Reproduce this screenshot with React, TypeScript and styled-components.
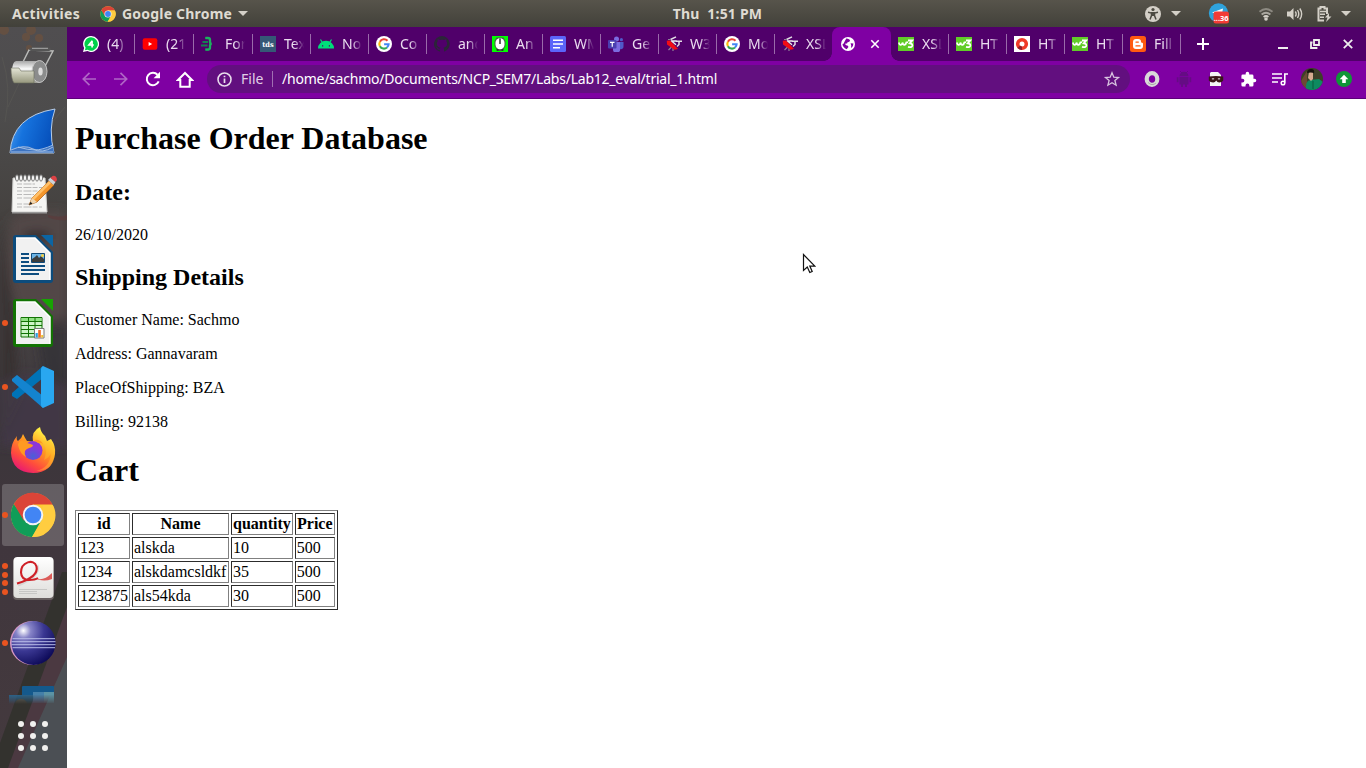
import React from "react";
import styled, { createGlobalStyle } from "styled-components";

const GlobalStyle = createGlobalStyle`
  html, body, #root { height: 100%; margin: 0; }
  body { overflow: hidden; background: #fff; }
  * { box-sizing: border-box; }
  svg { display: block; flex: none; }
`;

const uiFont = `"Noto Sans", "Open Sans", sans-serif`;

const Desktop = styled.div`
  width: 1366px;
  height: 768px;
  display: flex;
  flex-direction: column;
`;

/* ---------- system bar ---------- */
const SystemBar = styled.header`
  height: 27px;
  flex: none;
  display: grid;
  grid-template-columns: 667px 101px 1fr;
  align-items: center;
  background: linear-gradient(#57544b, #42413a);
  color: #dfdbd2;
  font: bold 14px/27px ${uiFont};
`;
const SystemLeft = styled.div`
  display: flex;
  align-items: center;
  padding-left: 12px;
`;
const SystemLabel = styled.span<{ $w: number; $sp?: number }>`
  width: ${(p) => p.$w}px;
  letter-spacing: ${(p) => p.$sp ?? 0}px;
  white-space: pre;
`;
const Clock = styled.div`
  text-align: center;
  white-space: pre;
  letter-spacing: 0.2px;
`;
const SystemRight = styled.div`
  display: flex;
  justify-content: flex-end;
  align-items: center;
  padding-right: 15px;
`;
const Slot = styled.div<{ $w: number }>`
  width: ${(p) => p.$w}px;
  display: flex;
  align-items: center;
  justify-content: center;
`;
const Caret = styled.i<{ $ml?: number }>`
  margin-left: ${(p) => p.$ml ?? 0}px;
  border: 5px solid transparent;
  border-top-color: #d4d0c8;
  border-bottom: 0;
`;

const Main = styled.div`
  flex: 1;
  display: flex;
  min-height: 0;
`;

/* ---------- dock ---------- */
const Dock = styled.nav`
  position: relative;
  width: 67px;
  flex: none;
  overflow: hidden;
  background: #494649;
`;
const Wallpaper = styled.svg`
  position: absolute;
  inset: 0;
`;
const DockList = styled.div`
  position: relative;
  padding-top: 8px;
  display: flex;
  flex-direction: column;
`;
const DockItem = styled.div<{ $active?: boolean }>`
  height: 62px;
  width: 62px;
  margin: 1px 0 1px 2px;
  border-radius: 3px;
  display: grid;
  grid-template-columns: 6px 50px 6px;
  align-items: center;
  justify-items: center;
  background: ${(p) => (p.$active ? "rgba(255,255,255,.2)" : "transparent")};
`;
const Dots = styled.div`
  display: flex;
  flex-direction: column;
  gap: 2.5px;
`;
const Dot = styled.i`
  width: 6px;
  height: 6px;
  border-radius: 50%;
  background: #e95420;
`;
const PeekItem = styled.div`
  height: 32px;
  padding: 10px 0 0 9px;
`;
const AppGrid = styled.div`
  display: grid;
  grid-template-columns: repeat(3, 6px);
  gap: 6px;
  padding: 14px 0 0 18px;
`;
const AppDot = styled.i`
  width: 6px;
  height: 6px;
  border-radius: 50%;
  background: #f1f0ee;
`;

/* ---------- browser ---------- */
const Browser = styled.section`
  flex: 1;
  min-width: 0;
  display: flex;
  flex-direction: column;
  background: #fff;
`;
const TabStrip = styled.div`
  height: 34px;
  flex: none;
  display: flex;
  padding-left: 10px;
  background: #50006a;
`;
const Tab = styled.div<{ $sep?: boolean; $w?: number }>`
  width: ${(p) => p.$w ?? 58}px;
  flex: none;
  display: flex;
  align-items: center;
  padding-left: 6px;
  gap: 8px;
  background: linear-gradient(#9a6aaa, #9a6aaa) right 1px top 7px / ${(p) => (p.$sep ? "1px" : "0")} 20px no-repeat;
`;
const TabTitle = styled.span`
  width: 20px;
  overflow: hidden;
  white-space: nowrap;
  color: #eadcef;
  font: 14px/20px ${uiFont};
  mask-image: linear-gradient(90deg, #000 50%, transparent 100%);
`;
const ActiveTab = styled.div`
  position: relative;
  width: 59px;
  flex: none;
  margin: 0 1px 0 -2px;
  display: flex;
  align-items: center;
  padding-left: 9px;
  gap: 15px;
  background: #7f00a3;
  border-radius: 8px 8px 0 0;
  &::before, &::after {
    content: "";
    position: absolute;
    bottom: 0;
    width: 8px;
    height: 8px;
  }
  &::before { left: -8px; background: radial-gradient(circle at 0 0, transparent 7.5px, #7f00a3 8px); }
  &::after { right: -8px; background: radial-gradient(circle at 100% 0, transparent 7.5px, #7f00a3 8px); }
`;
const NewTab = styled.div`
  width: 42px;
  display: flex;
  align-items: center;
  justify-content: center;
`;
const WindowControls = styled.div`
  margin-left: auto;
  display: flex;
  padding-right: 2px;
`;
const Toolbar = styled.div`
  height: 38px;
  flex: none;
  display: flex;
  align-items: center;
  padding: 0 6px 1px 6px;
  background: #7f00a3;
  border-bottom: 1px solid #5c0079;
`;
const Omnibox = styled.div`
  flex: none;
  width: 923px;
  height: 28px;
  margin: 0 6px 0 6px;
  border-radius: 14px;
  display: flex;
  align-items: center;
  padding: 0 8px 0 10px;
  background: #620f7f;
  color: #fff;
  font: 14px/28px ${uiFont};
`;
const Scheme = styled.span`
  width: 32px;
  margin-left: 9px;
  color: #e0cfe6;
  border-right: 1px solid #a06fb2;
  line-height: 16px;
`;
const Url = styled.span`
  flex: 1;
  margin-left: 9px;
  letter-spacing: -0.23px;
`;

/* ---------- document ---------- */
const Page = styled.main`
  flex: 1;
  padding: 0 8px;
  overflow: hidden;
  color: #000;
  font: 16px/normal "Liberation Serif", "Times New Roman", serif;
  display: flow-root;
`;
const Title = styled.h1`
  font-size: 32px;
  margin: 21.44px 0;
`;
const Subtitle = styled.h2`
  font-size: 24px;
  margin: 19.92px 0;
`;
const Line = styled.p`
  margin: 16px 0;
`;
const CartTable = styled.table.attrs({ border: 1 } as object)`
  font-size: 16px;
  th:nth-child(2) { width: 97px; }
  th:nth-child(4) { width: 40px; }
`;

const Pointer = styled.svg`
  position: absolute;
  left: 802px;
  top: 253px;
`;

/* ---------- icons ---------- */
const ChromeIcon = ({ s }: { s: number }) => (
  <svg width={s} height={s} viewBox="0 0 48 48">
    <circle cx="24" cy="24" r="23" fill="#fc3" />
    <path d="M4 12.500A23 23 0 0 0 23 47l10-18-18-1z" fill="#109d58" />
    <path d="M44.700 13.500A23 23 0 0 1 23 47l11-18 0-15z" fill="#ffcd40" />
    <path d="M4 12.500 14.500 30 24 13h20.500A23 23 0 0 0 4 12.500z" fill="#db4437" />
    <circle cx="24" cy="24" r="10.700" fill="#f4f4f4" />
    <circle cx="24" cy="24" r="8.700" fill="#4285f4" />
  </svg>
);

const Fav = ({ children }: { children: React.ReactNode }) => (
  <svg width="16" height="16" viewBox="0 0 16 16">{children}</svg>
);
const WhatsApp = () => (
  <Fav>
    <path d="M8 0a8 8 0 1 1-3.600 15.100L0 16l1.100-4A8 8 0 0 1 8 0z" fill="#fff" />
    <path d="M8 1.300a6.700 6.700 0 1 1-3.400 12.400L1.900 14.300l.7-2.600A6.700 6.700 0 0 1 8 1.300z" fill="#00d14b" />
    <path d="M9.300 4.700 5.900 9h4.900M9.100 4.700v6.800" fill="none" stroke="#fff" strokeWidth="1.600" />
  </Fav>
);
const YouTube = () => (
  <Fav><rect x=".7" y="2.300" width="14.600" height="11.400" rx="2" fill="#f00" /><path d="m6.600 5.900 3.600 2.100-3.600 2.100z" fill="#fff" /></Fav>
);
const Braces = () => (
  <Fav>
    <path d="M4 2h4M1.500 6h5.500M0 9.500h6.500M4 13.500h4" stroke="#12834f" strokeWidth="1.900" />
    <path d="M4.500 2H7q2 0 2 2v2q0 1.800 1.800 1.800Q9 7.800 9 9.600v2q0 2-2 2H4.500" fill="none" stroke="#1db05f" strokeWidth="2.300" />
  </Fav>
);
const Tds = () => (
  <Fav>
    <rect width="16" height="16" fill="#355876" />
    <text x="8" y="10.600" fill="#fff" fontSize="7" fontWeight="bold" fontFamily="DejaVu Serif, serif" textAnchor="middle" textLength="11.500" lengthAdjust="spacingAndGlyphs">tds</text>
  </Fav>
);
const Android = () => (
  <Fav>
    <path d="M0 12.500a8 7.800 0 0 1 16 0z" fill="#00de7a" />
    <path d="m2.500 3.500 2 3.300m9-3.300-2 3.300" stroke="#00de7a" strokeWidth="1.200" />
    <path d="M4 9.200h1.200v1.200H4zm6.800 0H12v1.200h-1.200z" fill="#50006a" />
  </Fav>
);
const Google = () => (
  <Fav>
    <circle cx="8" cy="8" r="8" fill="#fff" />
    <g fill="none" strokeWidth="2.100">
      <path d="M11.500 4.700A4.700 4.700 0 0 0 3.900 5.800" stroke="#ea4335" />
      <path d="M3.900 5.700a4.700 4.700 0 0 0 0 4.600" stroke="#fbbc05" />
      <path d="M3.900 10.200a4.700 4.700 0 0 0 7.100 1.300" stroke="#34a853" />
      <path d="M11 11.500a4.700 4.700 0 0 0 1.600-3.300H8.100" stroke="#4285f4" />
    </g>
  </Fav>
);
const GitHub = () => (
  <Fav>
    <path
      d="M8 0a8 8 0 0 0-2.500 15.600c.4.100.5-.2.500-.4v-1.500c-2.200.5-2.700-1-2.700-1-.4-.9-.9-1.200-.9-1.200-.7-.5.1-.5.100-.5.800.1 1.200.8 1.200.8.700 1.300 1.900.9 2.300.7.100-.5.300-.9.500-1.100-1.800-.2-3.600-.9-3.600-4 0-.9.300-1.600.8-2.100-.1-.2-.4-1 .1-2.100 0 0 .7-.2 2.200.8a7.600 7.600 0 0 1 4 0c1.500-1 2.200-.8 2.200-.8.400 1.100.1 1.900.1 2.100.5.500.8 1.200.8 2.100 0 3.100-1.900 3.800-3.700 4 .3.200.6.700.6 1.500v2.200c0 .2.100.5.500.4A8 8 0 0 0 8 0z"
      fill="#2b2538"
    />
  </Fav>
);
const Appium = () => (
  <Fav>
    <rect width="16" height="16" fill="#0f0" />
    <path d="M4.500 1.500 2.500 5v5l3 5h5l3-5V5l-2-3.500z" fill="#4a5a4a" />
    <rect x="3.500" y="2.300" width="9" height="11" rx="4.500" fill="#fff" />
    <path d="M8 2.500v5.500" stroke="#333" strokeWidth="1.500" />
    <path d="M5.500 13v2m5-2v2" stroke="#333" strokeWidth="1.700" />
  </Fav>
);
const Docs = () => (
  <Fav><rect width="16" height="16" rx="1.500" fill="#5b64fa" /><path d="M3 4.200h10M3 8h10M3 11.800h7" stroke="#fff" strokeWidth="1.600" /></Fav>
);
const Teams = () => (
  <Fav>
    <circle cx="8.500" cy="3" r="2.500" fill="#7b6be0" /><circle cx="13.400" cy="3.700" r="1.600" fill="#5059c9" />
    <path d="M5 6h7v6.500a3.500 3.500 0 0 1-7 1.500z" fill="#7b6be0" /><path d="M12 6h3.500v4.500A2.500 2.500 0 0 1 12 13z" fill="#5059c9" />
    <rect y="4" width="8.500" height="8.500" rx="1" fill="#4b3fb0" /><path d="M2 6.400h4.500M4.250 6.400v4.300" stroke="#fff" strokeWidth="1.200" />
  </Fav>
);
const Validator = () => (
  <Fav>
    <path d="M4.500 3.500 10 .8M10 5.300h6M13 5.500v3l-2 2" fill="none" stroke="#e3dde6" strokeWidth="1.500" />
    <path d="M5.500 11 2.500 14M7 11v4M2 3.500h3" fill="none" stroke="#8f8498" strokeWidth="1.200" />
    <path d="M.8 4.800 4 4.500l8 8.500-3.500.8L1 8.500z" fill="#f20d14" />
    <path d="m5 4.500 5 4.300M5.500 5h5" stroke="#eee" strokeWidth="1.300" />
  </Fav>
);
const W3s = () => (
  <Fav>
    <rect y="1" width="16" height="14" fill="#61cc28" />
    <path d="M.8 6.500q.4 2.500 2 2.300 1.500-.3 1.700-2.300.4 2.500 2 2.300Q8 8.500 8.300 6.500l1.700-.3" fill="none" stroke="#fff" strokeWidth="1.700" />
    <path d="M10 4.500h4.200L11.800 7.300q2.700.2 2.500 2.400-.6 2.300-4.300 1.100" fill="none" stroke="#fff" strokeWidth="1.800" />
  </Fav>
);
const RedRing = () => (
  <Fav>
    <rect width="16" height="16" fill="#fff" />
    <circle cx="8" cy="8" r="4.300" fill="none" stroke="#ef3a27" strokeWidth="3.600" />
    <path d="M8 14.100a6.100 6.100 0 0 1-4.500-2l2.700-2.500q1 1 1.800.9z" fill="#8e1e2b" />
  </Fav>
);
const Blogger = () => (
  <Fav>
    <rect width="16" height="16" rx="2.500" fill="#ff5a10" />
    <path d="M6 3h2.300q2.700 0 2.700 2.700 0 1 1 1t1 1V10q0 3-3 3H6q-3 0-3-3V6q0-3 3-3z" fill="#fff" />
    <path d="M6 6.100h2.300M6 9.900h4" stroke="#ff5a10" strokeWidth="1.400" strokeLinecap="round" />
  </Fav>
);
const Globe = () => (
  <svg width="14" height="14" viewBox="0 0 16 16">
    <circle cx="8" cy="8" r="8" fill="#fff" />
    <path d="M6 1.700q4 .3 4.300 2.300-.3 2-2.500 2-.8 0-.8 1.500H5q-.3 1.700 1 2 2.500 0 2.500 2L6.500 14Q2 12 1.700 8q2-.2 2-2zM11 7l3.200.4q0 3.200-2.400 5.200-.7-1.500 0-2.300z" fill="#7f00a3" />
  </svg>
);

type TabInfo = { title: string; Icon: React.FC; noSep?: boolean; w?: number };
const tabs: TabInfo[] = [
  { title: "(4)", Icon: WhatsApp, w: 59 },
  { title: "(21", Icon: YouTube, w: 59 },
  { title: "For", Icon: Braces, w: 59 },
  { title: "Tex", Icon: Tds },
  { title: "No", Icon: Android },
  { title: "Co", Icon: Google },
  { title: "and", Icon: GitHub },
  { title: "An", Icon: Appium },
  { title: "WM", Icon: Docs },
  { title: "Ge", Icon: Teams },
  { title: "W3", Icon: Validator },
  { title: "Mo", Icon: Google },
  { title: "XSL", Icon: Validator, noSep: true },
];
const tabsAfter: TabInfo[] = [
  { title: "XSL", Icon: W3s },
  { title: "HT", Icon: W3s },
  { title: "HT", Icon: RedRing },
  { title: "HT", Icon: W3s },
  { title: "Fill", Icon: Blogger },
];

const TabItem = ({ title, Icon, noSep, w }: TabInfo) => (
  <Tab $sep={!noSep} $w={w}>
    <Icon />
    <TabTitle>{title}</TabTitle>
  </Tab>
);

/* dock icons */
const Roll = () => (
  <svg width="50" height="50" viewBox="-2 -1 50 50">
    <defs>
      <linearGradient id="roll" x2="0" y2="1"><stop stopColor="#a8a8a8" /><stop offset=".35" stopColor="#f8f8f8" /><stop offset="1" stopColor="#9a9b92" /></linearGradient>
      <linearGradient id="flap" x2="0" y2="1"><stop stopColor="#e4e5d6" /><stop offset="1" stopColor="#97987e" /></linearGradient>
    </defs>
    <path d="m13 19 6-12 24 1-11 21" fill="none" stroke="#b9bab8" strokeWidth="1.500" />
    <path d="M21 6.300h18" stroke="#555" strokeWidth="3.400" strokeLinecap="round" /><path d="M22 5.300h16" stroke="#aaa" />
    <path d="M6 18h24v22H6q-4-1-4-11T6 18z" fill="url(#roll)" />
    <ellipse cx="29.500" cy="28.500" rx="7.500" ry="11" fill="#8b8c8c" stroke="#c6c6c6" />
    <ellipse cx="30.500" cy="28.500" rx="2.200" ry="4" fill="#ddd" />
    <path d="M1 25h8l2 3h13v12H4q-3-4-3-15z" fill="url(#flap)" stroke="#6a6b5c" strokeWidth=".6" />
  </svg>
);
const Fin = () => (
  <svg width="50" height="50" viewBox="-1 0 50 50">
    <defs><linearGradient id="fin" x1="0" x2="1" y2=".3"><stop stopColor="#5aa5ee" /><stop offset=".4" stopColor="#1673de" /><stop offset="1" stopColor="#0752bd" /></linearGradient></defs>
    <path d="M1 47Q3 10 46 3q-7 20-1 44z" fill="url(#fin)" stroke="#b7cde8" />
    <path d="M2 43q14-5 22-1t20-3l1 8H1z" fill="#3d73c0" />
    <path d="M2 44q13-6 22-1t20-2M2 46h42M9 41q10 3 17 3t18-5" fill="none" stroke="#aac5e8" strokeWidth=".9" />
  </svg>
);
const Notepad = () => (
  <svg width="50" height="50" viewBox="-1 1 50 50">
    <path d="M4 9h32l2 34H3z" fill="#f5f5f3" stroke="#cfcfcd" /><path d="M3 43h35v1.500H3z" fill="#999" />
    <g stroke="#b9b9b9" strokeDasharray="5 1.500 8 1"><path d="M8 15h18M8 18.500h25M8 22h21M8 25.500h17M8 29h23M8 35h12M8 38h25" /></g>
    {[8, 12, 16, 20, 24, 28, 32].map((x) => <ellipse key={x} cx={x} cy="9" rx="1.500" ry="3.200" fill="#fff" stroke="#666" strokeWidth=".9" />)}
    <path d="m20 36 3-7L40 12l5 4-17 17z" fill="#f4962b" stroke="#b26216" strokeWidth=".8" />
    <path d="m23 29 17-17 2 2-17 17z" fill="#ffc069" />
    <path d="m20 36 3-7 5 4z" fill="#f0d5ae" /><path d="m20 36 1.500-3.300 2 2z" fill="#222" />
    <path d="m39 11 2.500-2.500 5 4.500-2 3z" fill="#ccd1d8" /><path d="m41.500 9 2-2q4-1 4.500 4l-1.500 2z" fill="#dd4245" />
  </svg>
);
const OfficeDoc = ({ dark, light, children }: { dark: string; light: string; children: React.ReactNode }) => (
  <svg width="50" height="50" viewBox="-2 0 50 50">
    <path d="M6 1h20l17 17v28q0 3-3 3H6q-3 0-3-3V4q0-3 3-3z" fill={dark} />
    <path d="M31 1h12v12z" fill={light} />
    <path d="M6 4h19l15 15v27H6z" fill="#f1f1f1" />
    <path d="M6 4h19l15 15v27" fill="none" stroke="#fff" strokeWidth="1.500" />
    {children}
  </svg>
);
const Writer = () => (
  <OfficeDoc dark="#0c4c7d" light="#0c65a3">
    <path d="M11 20h8M11 24h8M11 28h8M11 32h24M11 36h24M11 40h18" stroke="#0d4d80" strokeWidth="2" />
    <path d="M21.500 19.500h13v9h-13z" fill="#6cb4e6" stroke="#114a78" />
    <path d="m22 28 0-3 3-2 2-2 2 3 2-2 3 3v3z" fill="#3c3d3d" /><circle cx="32.500" cy="21.500" r="1.500" fill="#f4d03f" />
  </OfficeDoc>
);
const Calc = () => (
  <OfficeDoc dark="#127303" light="#18a303">
    <path d="M11 19.500h21v19.500H11z" fill="#ccf4c6" stroke="#127303" />
    <path d="M11.500 20h20v3h-20z" fill="#92e285" />
    <path d="M18.500 20v19M25 20v19M11 23.500h21M11 27.500h21M11 31.500h21M11 35.500h21" stroke="#127303" />
    <path d="M24.500 30.500h9.500v9.500h-9.500z" fill="#fff" stroke="#777" />
    <path d="M25.500 35h2.300v4.500h-2.300z" fill="#2ba0dd" /><path d="M28.200 32h2.600v7.500h-2.600z" fill="#ed6b21" /><path d="M31.200 37h2v2.500h-2z" fill="#f1c12c" />
  </OfficeDoc>
);
const Code = () => (
  <svg width="50" height="50" viewBox="-2 0 50 50">
    <path d="m33 4 0 12L7 37l-5-3v-3z" fill="#0073b7" /><path d="M2 17l5-4 26 21v12L2 19z" fill="#1484cf" />
    <path d="m33 4 11 5v32l-11 5q-2-1-2-3V7q0-2 2-3z" fill="#29a7f0" />
  </svg>
);
const Firefox = () => (
  <svg width="50" height="50" viewBox="-2 0 50 50">
    <defs>
      <linearGradient id="ff" x1=".8" y1="0" x2=".2" y2="1"><stop offset=".1" stopColor="#fff044" /><stop offset=".42" stopColor="#ff9a20" /><stop offset=".72" stopColor="#ff4c3d" /><stop offset="1" stopColor="#e5117b" /></linearGradient>
      <radialGradient id="ffp" cx=".5" cy=".8"><stop stopColor="#4a5fd8" /><stop offset="1" stopColor="#8c36d9" /></radialGradient>
    </defs>
    <path d="M7 10q-1 4 1 5 4-3 5-7 2 4 4 7 3 0 6 1Q21 5 30 1q1 6 5 9l2 5 4-2q5 7 4 15-3 19-22 19Q2 46 1 27 1 17 7 10z" fill="url(#ff)" />
    <path d="M30 15q9 5 4 19 5-2 7-7-1 15-15 18 18 0 19-18-1-8-5-12" fill="#ffc62c" opacity=".4" />
    <circle cx="23" cy="24.500" r="9.500" fill="url(#ffp)" />
    <path d="M8 19q1-5 5-4 3 0 4 2 4 1 6 2 0 2-4 3-3 1-4 3 -1 3 1 6-6-3-8-12z" fill="#ff9a22" />
    <path d="M24 14q6-1 9 4-3-2-5-1z" fill="#ff9a22" />
  </svg>
);
const DocViewer = () => (
  <svg width="50" height="50" viewBox="-2 1 50 50">
    <defs><linearGradient id="dv" x2="0" y2="1"><stop stopColor="#fff" /><stop offset="1" stopColor="#deddda" /></linearGradient></defs>
    <rect x="3" y="5" width="41" height="42" rx="4" fill="#77716d" opacity=".7" /><rect x="3.500" y="4" width="40" height="41" rx="4" fill="url(#dv)" />
    <path d="M8 32Q31 23 27 12" fill="none" stroke="#bbb" strokeWidth="3" opacity=".4" />
    <path d="M7 30.500Q29 24 26.500 13.500C24 5 11 9 11 19.500q.5 7.500 8 7.500 6 0 9-2" fill="none" stroke="#cf2027" strokeWidth="2.100" />
    <path d="M23 24q9 6 19-4v6q-10 4-19-2z" fill="#dc5b58" />
    <path d="M9 36.500h28M9 38.500h18M9 40.500h18" stroke="#c7c7c5" />
  </svg>
);
const Eclipse = () => (
  <svg width="50" height="50" viewBox="-1.500 0 50 50">
    <defs><radialGradient id="ec" cx=".27" cy=".22" r=".85"><stop stopColor="#fff" /><stop offset=".2" stopColor="#8784c8" /><stop offset=".55" stopColor="#3a3792" /><stop offset="1" stopColor="#0d0a58" /></radialGradient></defs>
    <circle cx="22.500" cy="25" r="22" fill="#d797c4" /><circle cx="24" cy="25" r="22" fill="url(#ec)" />
    <path d="M3 20.700h42.500M2 23.700h44M2 26.700h44M3 29.700h42.500" stroke="#b8bce8" strokeWidth="1" />
  </svg>
);
const Peek = () => (
  <svg width="46" height="19" viewBox="0 0 46 19">
    <defs><linearGradient id="pk" x2="0" y2="1"><stop stopColor="#fff" /><stop offset=".5" stopColor="#fff" /><stop offset="1" stopColor="#000" /></linearGradient><mask id="pm"><path d="M0 0h46v19H0z" fill="url(#pk)" /></mask></defs>
    <g mask="url(#pm)">
      <path d="M13 2q0-1 1-1h30q1 0 1 1v16H13z" fill="#14598c" /><path d="M24 7h11v11H24z" fill="#4580a8" /><path d="M35 7h10v11H35z" fill="#5c94a4" />
      <path d="M0 10h24v9H0z" fill="#2b648c" /><path d="M6 19a6 5 0 0 1 12 0" fill="#66675e" />
    </g>
  </svg>
);

const dockItems: { Icon: React.FC; dots?: number; active?: boolean }[] = [
  { Icon: Roll },
  { Icon: Fin },
  { Icon: Notepad },
  { Icon: Writer },
  { Icon: Calc, dots: 1 },
  { Icon: Code, dots: 1 },
  { Icon: Firefox },
  { Icon: () => <ChromeIcon s={46} />, dots: 1, active: true },
  { Icon: DocViewer, dots: 4 },
  { Icon: Eclipse, dots: 1 },
];

const cart = [
  ["123", "alskda", "10", "500"],
  ["1234", "alskdamcsldkf", "35", "500"],
  ["123875", "als54kda", "30", "500"],
];

export default function App() {
  return (
    <Desktop>
      <GlobalStyle />
      <SystemBar>
        <SystemLeft>
          <SystemLabel $w={88} $sp={0.3}>Activities</SystemLabel>
          <ChromeIcon s={16} />
          <Slot $w={6} />
          <SystemLabel $w={111} $sp={0.2}>Google Chrome</SystemLabel>
          <Caret $ml={5} />
        </SystemLeft>
        <Clock>{"Thu  1:51 PM"}</Clock>
        <SystemRight>
          <Slot $w={20}>
            <svg width="16" height="16" viewBox="0 0 16 16">
              <circle cx="8" cy="8" r="8" fill="#d4d0c8" /><circle cx="8" cy="3.500" r="1.600" fill="#4c4a42" />
              <path d="M3 6.300 6.500 7v2.500L5 13.500M13 6.300 9.500 7v2.500l1.500 4" fill="none" stroke="#4c4a42" strokeWidth="1.500" /><path d="M6 6h4v4H6z" fill="#4c4a42" />
            </svg>
          </Slot>
          <Slot $w={26}><Caret /></Slot>
          <Slot $w={60}>
            <svg width="22" height="22" viewBox="0 0 22 22">
              <circle cx="10.500" cy="10" r="9.700" fill="#2fa3dc" /><path d="m4 9.500 11-4-1.500 8L9 11z" fill="#fff" />
              <rect x="5.500" y="8.500" width="15.500" height="12" rx="2.500" fill="#f33b36" />
              <text x="13.200" y="17.500" textAnchor="middle" fill="#fff" fontSize="7.500" fontFamily="Noto Sans, sans-serif">...36</text>
            </svg>
          </Slot>
          <Slot $w={34}>
            <svg width="16" height="14" viewBox="0 0 16 14">
              <g fill="none" strokeWidth="1.800"><path d="M1.500 4.800q6.500-5.500 13 0" stroke="#8d8a82" /><path d="M3.600 7.500q4.400-3.600 8.800 0" stroke="#aaa79f" /><path d="M5.600 10q2.400-2 4.800 0" stroke="#d4d0c8" /></g>
              <circle cx="8" cy="12" r="1.800" fill="#d4d0c8" />
            </svg>
          </Slot>
          <Slot $w={24}>
            <svg width="16" height="14" viewBox="0 0 16 14">
              <path d="M0 4.500h3L6.500 1v12L3 9.500H0z" fill="#d4d0c8" />
              <path d="M8.300 4.500q1.700 2.500 0 5M10.500 3q2.500 4 0 8M12.800 1.500q3.700 5.500 0 11" fill="none" stroke="#d4d0c8" strokeWidth="1.400" />
            </svg>
          </Slot>
          <Slot $w={34}>
            <svg width="15" height="16" viewBox="0 0 15 16">
              <path d="M7 14.500H1.500v-12h2v-1.500h4v1.500h2.500V8" fill="none" stroke="#d4d0c8" strokeWidth="2" />
              <path d="M3 5.500h6M3 8.300h5M3 11.200h4" stroke="#d4d0c8" strokeWidth="1.500" /><path d="m12 7-4 4.500h2.500L9 16l5.500-5.500H12z" fill="#d4d0c8" />
            </svg>
          </Slot>
          <Slot $w={10}><Caret /></Slot>
        </SystemRight>
      </SystemBar>
      <Main>
        <Dock>
          <Wallpaper width="67" height="741" viewBox="0 0 67 741">
            <defs>
              <linearGradient id="wall" x2="0" y2="1">
                <stop stopColor="#504e50" /><stop offset=".12" stopColor="#4d4c4c" /><stop offset=".25" stopColor="#454240" /><stop offset=".42" stopColor="#454042" /><stop offset=".52" stopColor="#3b363a" /><stop offset=".7" stopColor="#40363d" /><stop offset="1" stopColor="#443a3e" />
              </linearGradient>
              <filter id="soft" x="-30%" y="-30%" width="160%" height="160%"><feGaussianBlur stdDeviation="5" /></filter>
            </defs>
            <path d="M0 0h67v741H0z" fill="url(#wall)" />
            <g fill="#84542f" opacity=".4"><circle cx="31" cy="3" r="5" /><circle cx="26" cy="10" r="4" /><circle cx="39" cy="11" r="4" /><circle cx="4" cy="3" r="5" /><circle cx="29" cy="21" r="3" /></g>
            <path d="M5 95Q12 60 2 30M40 110l25-30M8 80l14-30" fill="none" stroke="#66685e" opacity=".3" />
            <g filter="url(#soft)">
              <path d="M12 190q35-10 55-5v115q-28 5-45-10-20-40-10-100z" fill="#574a48" opacity=".7" />
              <path d="M0 190q15 90 20 180l-20 40z" fill="#383332" />
              <path d="M25 205h24v8H25z" fill="#29272a" />
              <path d="M35 300l32-10v70H45z" fill="#2f2d32" opacity=".6" />
              <path d="M0 360q20-25 67 0v60H0z" fill="#45394a" opacity=".7" />
            </g>
            <path d="M48 188q12 3 19 0v5q-12 1-19-3z" fill="#5e3939" opacity=".6" />
            <path d="M67 550v115L22 741H0v-20z" fill="#4b3941" />
            <path d="M62 545h5v35L8 741H0v-25z" fill="#33322e" /><path d="M67 630v111H18z" fill="#4b4f54" />
          </Wallpaper>
          <DockList>
            {dockItems.map(({ Icon, dots = 0, active }, i) => (
              <DockItem key={i} $active={active}>
                <Dots>{Array.from({ length: dots }, (_, d) => <Dot key={d} />)}</Dots>
                <Icon />
              </DockItem>
            ))}
            <PeekItem><Peek /></PeekItem>
            <AppGrid>{Array.from({ length: 9 }, (_, i) => <AppDot key={i} />)}</AppGrid>
          </DockList>
        </Dock>
        <Browser>
          <TabStrip>
            {tabs.map((t, i) => <TabItem key={i} {...t} />)}
            <ActiveTab>
              <Globe />
              <svg width="10" height="10" viewBox="0 0 10 10"><path d="m1.300 1.300 7.400 7.400m0-7.400L1.300 8.700" stroke="#fff" strokeWidth="1.600" /></svg>
            </ActiveTab>
            {tabsAfter.map((t, i) => <TabItem key={i} {...t} />)}
            <NewTab><svg width="12" height="12" viewBox="0 0 12 12"><path d="M6 0v12M0 6h12" stroke="#fff" strokeWidth="2" /></svg></NewTab>
            <WindowControls>
              <Slot $w={32}><svg width="10" height="10" viewBox="0 0 10 10"><path d="M0 9h10" stroke="#eee" strokeWidth="2" /></svg></Slot>
              <Slot $w={32}><svg width="10" height="10" viewBox="0 0 10 10"><path d="M4 1h5v5H4zM2.500 3.500H1V9h5.500V8" fill="none" stroke="#eee" strokeWidth="1.800" /></svg></Slot>
              <Slot $w={33}><svg width="10" height="10" viewBox="0 0 10 10"><path d="m.8.8 8.400 8.400m0-8.400L.8 9.200" stroke="#eee" strokeWidth="1.800" /></svg></Slot>
            </WindowControls>
          </TabStrip>
          <Toolbar>
            <Slot $w={32}><svg width="14" height="14" viewBox="0 0 14 14"><path d="M14 7H1.500M7.500.8 1.300 7l6.200 6.200" fill="none" stroke="#b066c6" strokeWidth="1.700" /></svg></Slot>
            <Slot $w={32}><svg width="14" height="14" viewBox="0 0 14 14"><path d="M0 7h12.500M6.500.8 12.700 7l-6.200 6.200" fill="none" stroke="#b066c6" strokeWidth="1.700" /></svg></Slot>
            <Slot $w={32}><svg width="16" height="16" viewBox="0 0 16 16"><path d="M13.700 10.400A6.200 6.200 0 1 1 12.500 3.700" fill="none" stroke="#fff" strokeWidth="2" /><path d="M15 .8v6.400H8.600z" fill="#fff" /></svg></Slot>
            <Slot $w={32}><svg width="18" height="17" viewBox="0 0 18 17"><path d="M2 9 9 2l7 7h-2.300v6.800H4.300V9z" fill="none" stroke="#fff" strokeWidth="2" /></svg></Slot>
            <Omnibox>
              <svg width="15" height="15" viewBox="0 0 15 15"><circle cx="7.500" cy="7.500" r="6.500" fill="none" stroke="#e8dcec" strokeWidth="1.600" /><path d="M7.500 6.500v4.600M7.500 3.700v1.600" stroke="#e8dcec" strokeWidth="1.700" /></svg>
              <Scheme>File</Scheme>
              <Url>/home/sachmo/Documents/NCP_SEM7/Labs/Lab12_eval/trial_1.html</Url>
              <svg width="20" height="16" viewBox="-2 0 20 16"><path d="m8 1.800 1.800 4.400 4.700.3-3.600 3 1.200 4.700L8 11.700l-4.100 2.500 1.200-4.700-3.600-3 4.700-.3z" fill="none" stroke="#d8c4df" strokeWidth="1.300" /></svg>
            </Omnibox>
            <Slot $w={32}><svg width="16" height="16" viewBox="0 0 16 16"><ellipse cx="8" cy="8" rx="5.300" ry="5.900" fill="none" stroke="#d9d9d9" strokeWidth="4.200" /><path d="M4 11.500Q8 15.500 12 12" stroke="#aaa" fill="none" /></svg></Slot>
            <Slot $w={32}><svg width="16" height="16" viewBox="0 0 16 16"><path d="M3.500 5.300a4.500 4.500 0 0 1 9 0zM3.500 6h9v7.500h-9zM.8 6.300h1.700v5H.8zm12.700 0h1.700v5h-1.700zM5 13h2v3H5zm4 0h2v3H9z" fill="#650c84" /><path d="m4 0 2 2m6-2-2 2" stroke="#650c84" /></svg></Slot>
            <Slot $w={32}><svg width="16" height="16" viewBox="0 0 16 16"><path d="M3 1h7l3 3v11H2V2z" fill="#f5f5f5" /><path d="M.8 5.500q7-1 14.400 0v4q-1 2-4 2-2 0-3-2-1 2-3 2-3 0-4.400-2z" fill="#3a1718" /><path d="M3.500 8q1.500-1.300 3 0-1.500.9-3 0zm6 0q1.500-1.300 3 0-1.500.9-3 0z" fill="#fff" /></svg></Slot>
            <Slot $w={32}><svg width="17" height="17" viewBox="0 0 24 24"><path d="M20.500 11H19V7a2 2 0 0 0-2-2h-4V3.500a2.500 2.500 0 0 0-5 0V5H4a2 2 0 0 0-2 2v3.800h1.500a2.700 2.700 0 0 1 0 5.400H2V20a2 2 0 0 0 2 2h3.800v-1.500a2.700 2.700 0 0 1 5.400 0V22H17a2 2 0 0 0 2-2v-4h1.500a2.500 2.500 0 0 0 0-5z" fill="#fff" /></svg></Slot>
            <Slot $w={32}><svg width="16" height="14" viewBox="0 0 16 14"><path d="M0 2h10M0 6h10M0 10h6M16 2h-3.200v8.500" stroke="#fff" strokeWidth="1.600" fill="none" /><circle cx="11" cy="11" r="1.800" fill="none" stroke="#fff" strokeWidth="1.500" /></svg></Slot>
            <Slot $w={32}>
              <svg width="22" height="22" viewBox="0 0 22 22">
                <defs><clipPath id="av"><circle cx="11" cy="11" r="11" /></clipPath></defs>
                <g clipPath="url(#av)"><path d="M0 0h22v22H0z" fill="#3d4028" /><path d="M0 13 6 3v19H0z" fill="#6b4a35" /><path d="M5 22q-1-9 4-10l9-1 4 3v8z" fill="#0e8a60" /><path d="M8 4h4v7l-2 2-3-3z" fill="#d5ab90" /><path d="M6 5q0-4 4-4t3 4q-3-1-7 0z" fill="#17150f" /><path d="M12 13v8" stroke="#0a5a3f" /></g>
              </svg>
            </Slot>
            <Slot $w={32}><svg width="16" height="16" viewBox="0 0 16 16"><circle cx="8" cy="8" r="8" fill="#0f9638" /><path d="m8 3.700 4.300 4.500H9.800V12H6.200V8.200H3.700z" fill="#fff" /></svg></Slot>
          </Toolbar>
          <Page>
            <Title>Purchase Order Database</Title>
            <Subtitle>Date:</Subtitle>
            <Line>26/10/2020</Line>
            <Subtitle>Shipping Details</Subtitle>
            <Line>Customer Name: Sachmo</Line>
            <Line>Address: Gannavaram</Line>
            <Line>PlaceOfShipping: BZA</Line>
            <Line>Billing: 92138</Line>
            <Title>Cart</Title>
            <CartTable>
              <tbody>
                <tr><th>id</th><th>Name</th><th>quantity</th><th>Price</th></tr>
                {cart.map((row) => (
                  <tr key={row[0]}>{row.map((cell, i) => <td key={i}>{cell}</td>)}</tr>
                ))}
              </tbody>
            </CartTable>
          </Page>
        </Browser>
      </Main>
      <Pointer width="14" height="22" viewBox="0 0 14 22">
        <path d="M1.500 1.500v16l3.800-3.500 2.500 5.500 2.400-1-2.400-5.400h5z" fill="#fff" stroke="#111" strokeWidth="1.200" />
      </Pointer>
    </Desktop>
  );
}
